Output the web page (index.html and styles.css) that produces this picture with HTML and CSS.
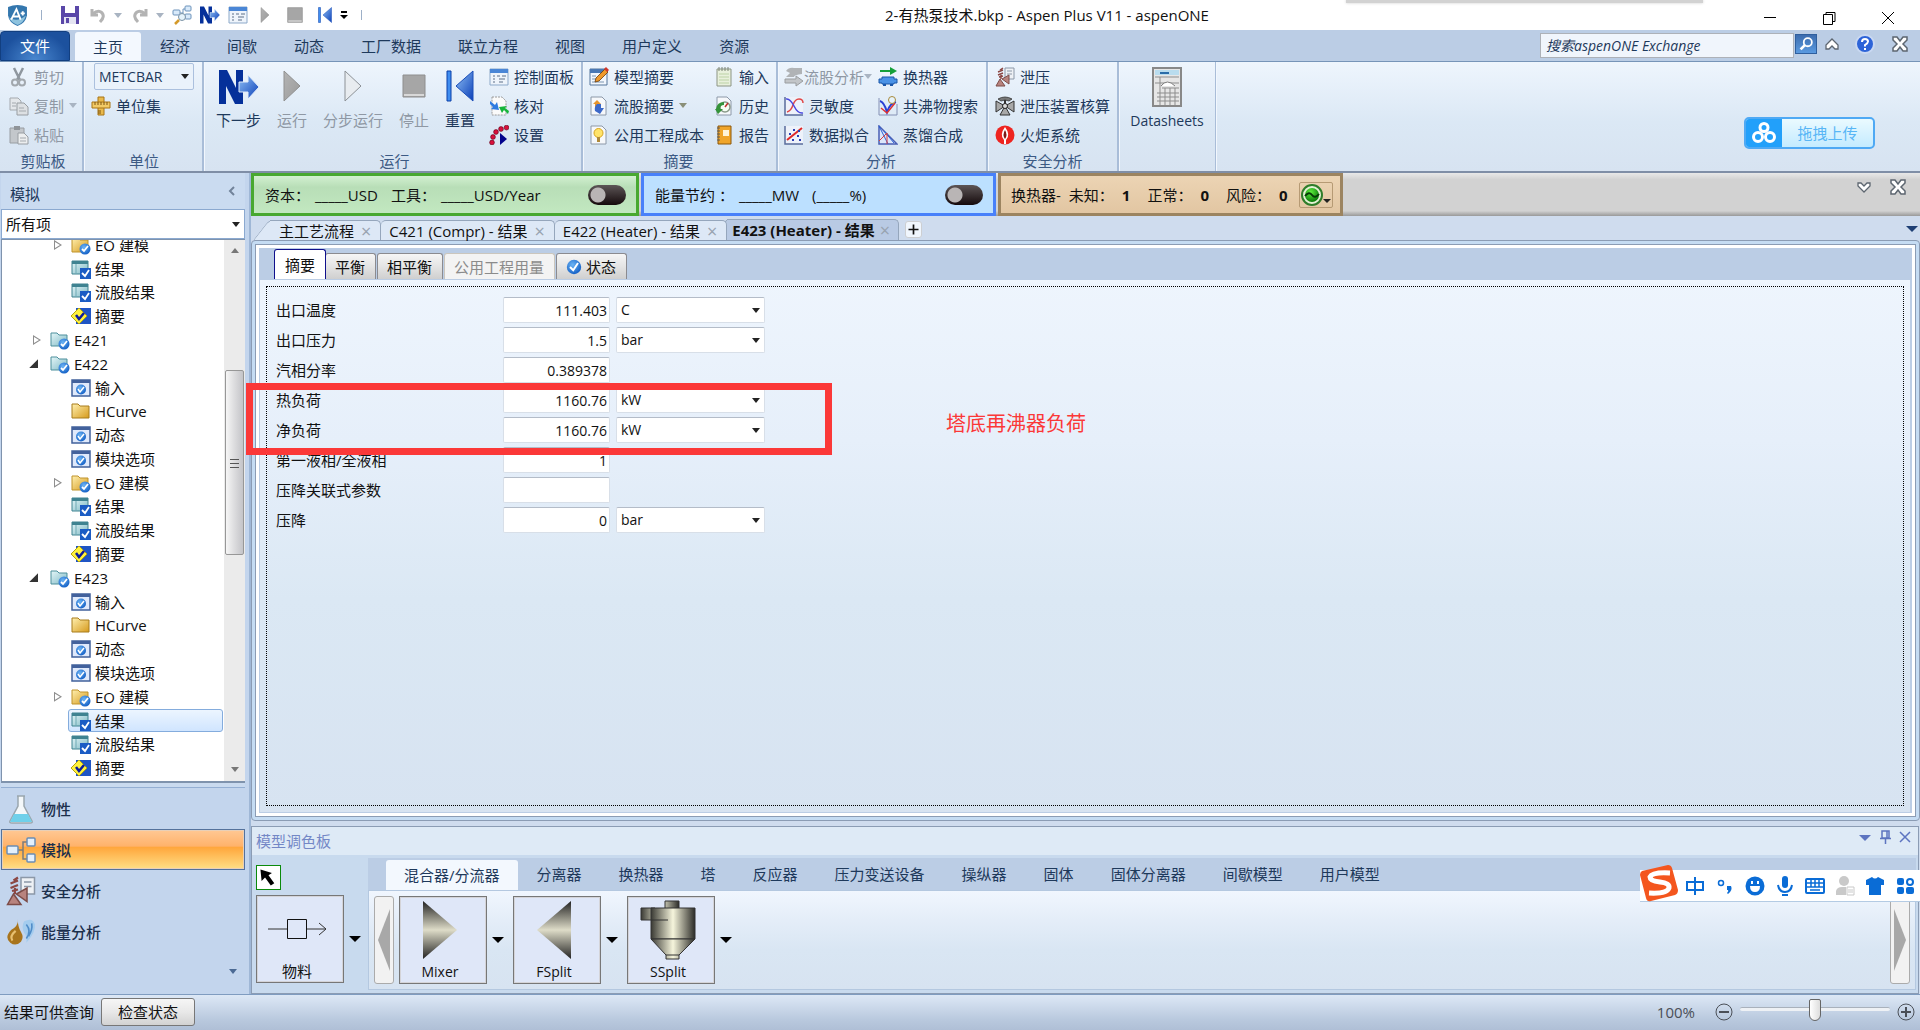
FILE: index.html
```html
<!DOCTYPE html>
<html lang="zh-CN">
<head>
  <meta charset="UTF-8">
  <meta name="viewport" content="width=device-width, initial-scale=1.0">
  <title>2-有热泵技术.bkp - Aspen Plus V11 - aspenONE</title>
  <link rel="stylesheet" href="styles.css">
</head>
<body>
  <!-- Icon sprite -->
  <svg class="sprite" width="0" height="0" aria-hidden="true">
    <defs>
      <linearGradient id="g-blue" x1="0" y1="0" x2="1" y2="1"><stop offset="0" stop-color="#8fc0f5"/><stop offset="1" stop-color="#0b3fb8"/></linearGradient>
      <linearGradient id="g-grey" x1="0" y1="0" x2="1" y2="1"><stop offset="0" stop-color="#b4b4b4"/><stop offset="1" stop-color="#9a9a9a"/></linearGradient>
      <linearGradient id="g-gold" x1="0" y1="0" x2="1" y2="1"><stop offset="0" stop-color="#fff0b0"/><stop offset="1" stop-color="#d69a1c"/></linearGradient>
      <linearGradient id="g-teal" x1="0" y1="0" x2="1" y2="1"><stop offset="0" stop-color="#e4f6f8"/><stop offset="1" stop-color="#7fb9c4"/></linearGradient>
      <linearGradient id="g-coneY" x1="0" y1="0" x2="0" y2="1"><stop offset="0" stop-color="#222"/><stop offset=".5" stop-color="#dedcc8"/><stop offset="1" stop-color="#222"/></linearGradient>
      <linearGradient id="g-coneX" x1="0" y1="0" x2="1" y2="0"><stop offset="0" stop-color="#3a3a34"/><stop offset=".5" stop-color="#f6f5dc"/><stop offset="1" stop-color="#2c2c28"/></linearGradient>
      <radialGradient id="g-ball" cx=".4" cy=".35" r=".7"><stop offset="0" stop-color="#6cb4f4"/><stop offset="1" stop-color="#0f5cc4"/></radialGradient>
      <radialGradient id="g-green" cx=".4" cy=".3" r=".7"><stop offset="0" stop-color="#5fef3e"/><stop offset="1" stop-color="#087a08"/></radialGradient>
    </defs>
    <symbol id="i-logo" viewBox="0 0 20 20"><path d="M1 2q9-4 18 0v8q-1 7-9 10Q2 17 1 10z" fill="#3477ae"/><path d="M2 12q8 5 16-2-2 7-8 9-6-2-8-7z" fill="#8fc3de"/><path d="M4 14 9 4l4 10M6 11h5M13 8h4M15 6v4" fill="none" stroke="#fff" stroke-width="1.800"/></symbol>
    <symbol id="i-save" viewBox="0 0 20 20"><path d="M1 1h18v18H1z" fill="#5a47a8"/><path d="M5 1h10v7H5z" fill="#fff"/><path d="M4 12h12v7H4z" fill="#e4e4f2"/><path d="M6 13h3v5H6z" fill="#5a47a8"/></symbol>
    <symbol id="i-undo" viewBox="0 0 20 20"><path d="M4 4v6h6M5 9q4-4 8-2 5 4-1 10" fill="none" stroke="#b3b3b3" stroke-width="3"/></symbol>
    <symbol id="i-redo" viewBox="0 0 20 20"><path d="M16 4v6h-6M15 9q-4-4-8-2-5 4 1 10" fill="none" stroke="#b3b3b3" stroke-width="3"/></symbol>
    <symbol id="i-flow" viewBox="0 0 20 20"><path d="M6 8h5M11 4v8M11 4h3M11 12h3" stroke="#6d93bb" fill="none"/><rect x="1" y="5" width="7" height="5" rx="1" fill="#d9eafa" stroke="#6d93bb"/><rect x="13" y="1" width="6" height="5" rx="1" fill="#d9eafa" stroke="#6d93bb"/><rect x="13" y="9" width="6" height="5" rx="1" fill="#d9eafa" stroke="#6d93bb"/><circle cx="10" cy="12" r="3.500" fill="#e6f3fb" stroke="#7c93a5"/><path d="m7 15-4 4" stroke="#d49a2a" stroke-width="2.500"/></symbol>
    <symbol id="i-next" viewBox="0 0 40 34"><path d="M0 0h8l9 18V0h7v34h-8L7 16v18H0z" fill="#05309a"/><path d="M20 12h9V5l11 12-11 12v-7h-9z" fill="url(#g-blue)" stroke="#dfeafa"/></symbol>
    <symbol id="i-panel" viewBox="0 0 20 20"><path d="M1 2h18v16H1z" fill="#eef4fb" stroke="#8da9c9"/><path d="M1 2h18v4H1z" fill="#4a86d6"/><path d="M4 9h2M4 12h2M4 15h2M8 9h3M13 9h4M10 12h6M10 15h4" stroke="#5c6f87" fill="none"/></symbol>
    <symbol id="i-run" viewBox="0 0 18 32"><path d="M1 1v30l16-15z" fill="url(#g-grey)" stroke="#909090"/></symbol>
    <symbol id="i-step" viewBox="0 0 18 32"><path d="M1 1v30l16-15z" fill="#e8ecf0" stroke="#8c9196"/></symbol>
    <symbol id="i-stop" viewBox="0 0 24 24"><path d="M1 1h22v22H1z" fill="#a6a6a6" stroke="#8e8e8e"/><path d="M2 21h20" stroke="#d8d8d8" stroke-width="2"/></symbol>
    <symbol id="i-reset" viewBox="0 0 28 32"><path d="M1 1h4v30H1z" fill="#3f8df0" stroke="#0b3fa8"/><path d="M27 1v30L10 16z" fill="url(#g-blue)" stroke="#1b4eb8"/></symbol>
    <symbol id="i-cut" viewBox="0 0 20 20"><path d="m5 1 6 12M14 1 8 13" stroke="#8f979f" stroke-width="2.500"/><circle cx="6" cy="15.500" r="3" fill="none" stroke="#a2a8ae" stroke-width="2"/><circle cx="13" cy="15.500" r="3" fill="none" stroke="#a2a8ae" stroke-width="2"/></symbol>
    <symbol id="i-copy" viewBox="0 0 20 20"><path d="M1 2h8l3 3v9H1z" fill="#e4e7ea" stroke="#a4a9ae"/><path d="M8 7h7l4 4v8H8z" fill="#dde0e3" stroke="#989da2"/><path d="M3 7h4M3 10h4M10 12h5M10 15h7" stroke="#a4a9ae"/></symbol>
    <symbol id="i-paste" viewBox="0 0 20 20"><path d="M1 3h14v15H1z" fill="#c3c7cb" stroke="#989da2"/><path d="M5 1h6v4H5z" fill="#8f9499"/><path d="M9 8h6l4 4v7H9z" fill="#eceeef" stroke="#989da2"/><path d="M11 13h6M11 16h6" stroke="#a4a9ae"/></symbol>
    <symbol id="i-ruler" viewBox="0 0 20 20"><path d="M7 1h6v18H7z" fill="#e9b94c" stroke="#a87514"/><path d="M1 6h18v6H1z" fill="#f2ca66" stroke="#a87514"/><path d="M4 6v3M7 6v3M10 6v3M13 6v3M16 6v3M7 15h3M7 17h3" stroke="#7c5510"/></symbol>
    <symbol id="i-check" viewBox="0 0 20 20"><path d="M3 1h10l4 4v14H3z" fill="#fafafa" stroke="#9a9a9a" stroke-dasharray="2 1"/><path d="m1 5 5 4 2-3 2 8-8-1 2-2-3-3z" fill="#2f7be0"/><path d="m19 18-4-4-2 3-3-6 8-1-2 2 4 3z" fill="#17b53a"/></symbol>
    <symbol id="i-settings" viewBox="0 0 20 20"><g fill="#d8103c" stroke="#5c0018" stroke-width=".6"><circle cx="3" cy="17.500" r="2.400"/><circle cx="4" cy="12" r="2.400"/><circle cx="7" cy="7" r="2.400"/><circle cx="12" cy="4" r="2.400"/><circle cx="17.500" cy="2.600" r="2.400"/></g><path d="m11 8 7 6-7 6z" fill="#02028c"/></symbol>
    <symbol id="i-model" viewBox="0 0 20 20"><path d="M1 2h17v16H1z" fill="#f2f7fd" stroke="#54749a"/><path d="M1 2h17v4H1z" fill="#4a78b4"/><path d="M3 9h4M3 12h4M3 15h12" stroke="#7d95b0"/><path d="m6 15 1-4 9-9 3 3-9 9z" fill="#f09a2c" stroke="#6b3c0a" stroke-width=".8"/><path d="m15 2 2-2 3 3-2 2z" fill="#d0382c"/></symbol>
    <symbol id="i-stream" viewBox="0 0 20 20"><path d="M2 1h11l4 4v14H2z" fill="#f6f8fb" stroke="#8c98a8"/><path d="M4 8l4-4 4 4h-2v4H6V8z" fill="#e8942a"/><path d="M8 8h4v4h3l-4 6-5-3q-1-4 2-7z" fill="#3c68c8"/></symbol>
    <symbol id="i-cost" viewBox="0 0 20 20"><path d="M2 1h11l4 4v14H2z" fill="#f6f8fb" stroke="#8c98a8"/><circle cx="9.500" cy="8" r="4.500" fill="#ffe36a" stroke="#d8a51c"/><path d="M8 12h3v5H8z" fill="#b08a3a"/></symbol>
    <symbol id="i-input" viewBox="0 0 20 20"><path d="M3 2h14v17H3z" fill="#e8f0dc" stroke="#8c9584"/><path d="M5 0v4M8 0v4M11 0v4M14 0v4" stroke="#7c8476"/><path d="M5 7h10M5 10h10M5 13h10M5 16h10" stroke="#bcd2a6"/></symbol>
    <symbol id="i-history" viewBox="0 0 20 20"><path d="M3 1h10l4 4v14H3z" fill="#f6f8fb" stroke="#8c98a8"/><circle cx="11" cy="11" r="5" fill="#f6fff4" stroke="#8a9a8a" stroke-width="1.500"/><path d="M2 13q1-7 8-7v3q-4 0-4 4h3l-5 5-3-5z" fill="#35933a"/><path d="m11 11 3-4" stroke="#c03030" stroke-width="1.500"/></symbol>
    <symbol id="i-report" viewBox="0 0 20 20"><path d="M4 1h13v18H4z" fill="#f0a52a" stroke="#8a570a"/><path d="M9 5h6v6H9z" fill="#fff4d8"/><path d="M3 3h3M3 6h3M3 9h3M3 12h3M3 15h3" stroke="#5b5b5b"/></symbol>
    <symbol id="i-sflow" viewBox="0 0 20 20"><path d="M2 4q3-4 8-3h8v6q-8 1-8 3H2l4-4z" fill="#b0b3b6"/><path d="M1 12h11V9l7 5-7 5v-3H1z" fill="#c2c5c8" stroke="#9a9da0"/></symbol>
    <symbol id="i-sens" viewBox="0 0 20 20"><path d="M1 1h18v18H1z" fill="#eef2fa"/><path d="M1 1v18h18" fill="none" stroke="#5a6c9c" stroke-width="1.500"/><path d="M3 16q4-1 6-7t6-6 4 4" fill="none" stroke="#e04848" stroke-width="1.500"/><path d="M2 3q4-1 8 7t9 7" fill="none" stroke="#4848e0" stroke-width="1.500"/></symbol>
    <symbol id="i-fit" viewBox="0 0 20 20"><path d="M1 1h18v18H1z" fill="#eef2fa"/><path d="M1 1v18h18" fill="none" stroke="#5a6c9c" stroke-width="1.500"/><path d="M3 15 18 3" stroke="#e02828" stroke-width="2"/><path d="M5 8h2v2H5zM9 4h2v2H9zM8 14h2v2H8zM13 10h2v2h-2zM15 14h2v2h-2zM14 5h2v2h-2z" fill="#2a3fb4"/></symbol>
    <symbol id="i-heatx" viewBox="0 0 20 20"><path d="M2 3h10V0l7 4-7 4V5H2z" fill="#15a03a"/><path d="M1 12h3v-2h12v2h3v4h-3v1H4v-1H1z" fill="#4a92e6" stroke="#1b56a8"/><path d="M5 17h3v2H5zM12 17h3v2h-3z" fill="#1b56a8"/></symbol>
    <symbol id="i-azeo" viewBox="0 0 20 20"><path d="M1 2v17h18V8" fill="none" stroke="#8490b4"/><path d="M2 5q4 1 7 11 3-9 9-10" fill="none" stroke="#2a3fd4" stroke-width="2"/><path d="m3 12 6 5 8-10" fill="none" stroke="#e03030" stroke-width="1.500"/><circle cx="14" cy="4" r="3.500" fill="#e6f3fb" stroke="#a8893a"/></symbol>
    <symbol id="i-dist" viewBox="0 0 20 20"><path d="M1 1v18h18z" fill="#dbe6fa" stroke="#4a5fb4" stroke-width="1.500"/><path d="M1 1 10 19M6 6l10 12" fill="none" stroke="#2a5fd4"/><path d="m1 16 8-8v11" fill="none" stroke="#d83c3c"/></symbol>
    <symbol id="i-relief" viewBox="0 0 20 20"><path d="M10 1h9v11h-9z" fill="#eef1f5" stroke="#8c98a8"/><path d="M12 4h5M12 7h5" stroke="#8c98a8"/><path d="m1 19 4-7 5 7zM7 12l7-4v9z" fill="#b8837e" stroke="#7c4c48"/><path d="M6 12V8M3 8l5-2M3 5l5-2M4 10l4-1M5 3l3-2" stroke="#8c4844" stroke-width="1.500"/></symbol>
    <symbol id="i-valve" viewBox="0 0 20 20"><path d="M3 3q7-4 14 0l-3 2q-4-2-8 0z" fill="#777" stroke="#333" stroke-width=".8"/><path d="M10 10 1 5v11zM10 10l9-5v11zM10 10l-5 9h10z" fill="#a8a8a8" stroke="#333"/><path d="M10 4v6" stroke="#333" stroke-width="2"/><circle cx="10" cy="10" r="2.500" fill="#ddd" stroke="#222"/></symbol>
    <symbol id="i-flare" viewBox="0 0 20 20"><circle cx="10" cy="10" r="9.500" fill="#ee2420"/><path d="M9 19h2v-4q5-5-1-13-6 8-1 13z" fill="#fff"/><path d="M10 5q-3 5 0 9 3-4 0-9z" fill="#801818"/></symbol>
    <symbol id="i-sheet" viewBox="0 0 30 40"><path d="M1 1h28v38H1z" fill="#e6e6e6" stroke="#888" stroke-width="2"/><path d="M3 3h24v5H3z" fill="#b9dcee"/><path d="M8 6h9" stroke="#2a6ca8" stroke-width="2"/><path d="M3 10h24M3 16h24M10 21h17M5 26h22M5 30h22M5 34h22M8 10v28M13 21v17M18 21v17M23 21v17" stroke="#8d8d8d"/><path d="M9 19q6-8 14 0" fill="#fff" stroke="#7d7d7d"/></symbol>
    <symbol id="i-x" viewBox="0 0 18 16"><path d="M2 1h4l3 4 3-4h4v3l-4 4 4 4v3h-4l-3-4-3 4H2v-3l4-4-4-4z" fill="#fff" stroke="#5d6670" stroke-width="1.500"/></symbol>
    <symbol id="i-up" viewBox="0 0 14 12"><path d="m7 1 6 6v4h-3L7 8l-3 3H1V7z" fill="#fff" stroke="#5d6670" stroke-width="1.300"/></symbol>
    <symbol id="i-heart" viewBox="0 0 14 12"><path d="M7 11 1 5V2h3l3 3 3-3h3v3z" fill="#fff" stroke="#5d6670" stroke-width="1.300"/></symbol>
    <symbol id="i-help" viewBox="0 0 20 20"><circle cx="10" cy="10" r="9" fill="#2c63d8" stroke="#c9d8f2" stroke-width="2"/><path d="M7 8q0-3 3-3t3 2.500q0 1.500-3 3.500v1.500M10 14v2" fill="none" stroke="#fff" stroke-width="2"/></symbol>
    <symbol id="i-lens" viewBox="0 0 22 20"><circle cx="13" cy="8" r="4.500" fill="none" stroke="#fff" stroke-width="2"/><path d="m10 11-5 5" stroke="#fff" stroke-width="3"/></symbol>
    <symbol id="i-ball" viewBox="0 0 20 20"><circle cx="10" cy="10" r="9" fill="url(#g-ball)"/><path d="m5 10 4 4 6-9" fill="none" stroke="#fff" stroke-width="2.500"/></symbol>
    <symbol id="i-eo" viewBox="0 0 20 20"><path d="M1 3h6l2 2h8v12H1z" fill="url(#g-gold)" stroke="#c0932a"/><circle cx="14" cy="14" r="5.500" fill="url(#g-ball)"/><path d="m11 14 2 2 4-5" fill="none" stroke="#fff" stroke-width="1.800"/></symbol>
    <symbol id="i-folder" viewBox="0 0 20 20"><path d="M1 3h6l2 2h9v12H1z" fill="url(#g-gold)" stroke="#a87c1c"/></symbol>
    <symbol id="i-block" viewBox="0 0 20 20"><path d="M1 3h6l2 2h8v11H1z" fill="url(#g-teal)" stroke="#4d8f9c"/><circle cx="14" cy="14" r="5.500" fill="url(#g-ball)"/><path d="m11 14 2 2 4-5" fill="none" stroke="#fff" stroke-width="1.800"/></symbol>
    <symbol id="i-result" viewBox="0 0 20 20"><path d="M1 2h16v13H1z" fill="url(#g-teal)" stroke="#3f8391"/><path d="M1 2h16v3H1z" fill="#3f8391"/><path d="M5 5v10" stroke="#6fa9b4"/><path d="M9 9h11v11H9z" fill="#1b5cc4"/><path d="m11 14 3 3 4-6" fill="none" stroke="#fff" stroke-width="1.800"/></symbol>
    <symbol id="i-summary" viewBox="0 0 20 20"><path d="M5 2h15v16H5z" fill="#1f55c4"/><path d="m8 2 8 8-8 8-8-8z" fill="#fff23c" stroke="#b4a410"/><path d="m5 9 3 4 5-6" fill="none" stroke="#0b1b9c" stroke-width="2.500"/></symbol>
    <symbol id="i-form" viewBox="0 0 20 20"><path d="M1 2h18v16H1z" fill="#dfe9fb" stroke="#42619c" stroke-width="1.500"/><path d="M1 2h18v3H1z" fill="#42619c"/><circle cx="10" cy="11.500" r="5" fill="url(#g-ball)"/><path d="m7 11 2 3 4-5" fill="none" stroke="#fff" stroke-width="1.500"/></symbol>
    <symbol id="i-flask" viewBox="0 0 30 30"><path d="M11 2h8M12 2v10L4 27q-1 2 2 2h18q3 0 2-2l-8-15V2" fill="#f4f8fa" stroke="#9aa6ae" stroke-width="1.500"/><path d="M8 20h14l4 8H4z" fill="#6fd0ea"/></symbol>
    <symbol id="i-sim" viewBox="0 0 30 26"><path d="M12 13h5M22 5h-5v17h5" fill="none" stroke="#7c7c7c" stroke-width="1.500"/><g fill="#e4f0fc" stroke="#6b8db4" stroke-width="1.500"><rect x="1" y="9" width="11" height="8" rx="1"/><rect x="21" y="1" width="8" height="8" rx="1"/><rect x="21" y="17" width="8" height="8" rx="1"/></g></symbol>
    <symbol id="i-energy" viewBox="0 0 28 26"><path d="M11 1q1 6-6 10-7 7-1 12 5 4 10-1 3-4 0-9-3-5-3-12z" fill="#a8741c"/><path d="M9 12q-6 5-3 9" fill="none" stroke="#e8c070" stroke-width="2"/><path d="M17 3q8-4 10 3 1 7-8 17 1-6-2-9-3-6 0-11z" fill="#a4ccee"/><path d="M19 6q5 6 0 13M24 5q1 6-3 12" fill="none" stroke="#4f8cc8" stroke-width="1.500"/></symbol>
    <symbol id="i-cloud" viewBox="0 0 24 24"><g fill="none" stroke="#fff" stroke-width="3"><circle cx="12" cy="6.500" r="4"/><circle cx="6" cy="16" r="4.500"/><circle cx="18" cy="16" r="4.500"/></g></symbol>
  </svg>

  <header class="titlebar">
    <div class="quick">
      <svg class="logo"><use href="#i-logo"/></svg>
      <i class="vsep"></i>
      <button aria-label="保存"><svg><use href="#i-save"/></svg></button>
      <button class="split off" aria-label="撤销"><svg><use href="#i-undo"/></svg></button>
      <button class="split off" aria-label="重做"><svg><use href="#i-redo"/></svg></button>
      <button aria-label="流程"><svg><use href="#i-flow"/></svg></button>
      <button aria-label="下一步"><svg><use href="#i-next"/></svg></button>
      <button aria-label="控制面板"><svg><use href="#i-panel"/></svg></button>
      <button class="mini" aria-label="运行"><svg><use href="#i-run"/></svg></button>
      <button class="mini" aria-label="停止"><svg><use href="#i-stop"/></svg></button>
      <button class="mini" aria-label="重置"><svg><use href="#i-reset"/></svg></button>
      <button class="more" aria-label="自定义"><svg viewBox="0 0 8 8"><path d="M1 0h6v2H1zM0 4h8L4 8z"/></svg></button>
      <i class="vsep"></i>
    </div>
    <h1>2-有热泵技术.bkp - Aspen Plus V11 - aspenONE</h1>
    <div class="window-buttons">
      <button aria-label="最小化"><svg viewBox="0 0 14 14"><path d="M1 6.500h12"/></svg></button>
      <button aria-label="还原"><svg viewBox="0 0 14 14"><path d="M1.500 3.500h9v10h-9zM4 3V1.500h9v9h-2"/></svg></button>
      <button aria-label="关闭"><svg viewBox="0 0 14 14"><path d="m1 1 12 12M13 1 1 13"/></svg></button>
    </div>
    <div class="dock-edge"></div>
  </header>

  <nav class="menu">
    <button class="file">文件</button>
    <div class="tabs">
      <button class="tab active">主页</button>
      <button class="tab">经济</button>
      <button class="tab">间歇</button>
      <button class="tab">动态</button>
      <button class="tab">工厂数据</button>
      <button class="tab">联立方程</button>
      <button class="tab">视图</button>
      <button class="tab">用户定义</button>
      <button class="tab">资源</button>
    </div>
    <div class="menu-tools">
      <input class="search" type="text" aria-label="搜索" value="搜索aspenONE Exchange">
      <button class="search-go" aria-label="搜索"><svg><use href="#i-lens"/></svg></button>
      <button class="w14" aria-label="折叠功能区"><svg><use href="#i-up"/></svg></button>
      <button class="w20" aria-label="帮助"><svg><use href="#i-help"/></svg></button>
      <button class="w16" aria-label="关闭"><svg><use href="#i-x"/></svg></button>
    </div>
  </nav>

  <section class="ribbon">
    <div class="group clipboard">
      <div class="group-body">
        <div class="col">
          <button class="cmd off"><svg><use href="#i-cut"/></svg>剪切</button>
          <button class="cmd off drop"><svg><use href="#i-copy"/></svg>复制</button>
          <button class="cmd off"><svg><use href="#i-paste"/></svg>粘贴</button>
        </div>
      </div>
      <h2>剪贴板</h2>
    </div>
    <div class="group units">
      <div class="group-body">
        <div class="col">
          <select class="unit-set" aria-label="单位集"><option>METCBAR</option></select>
          <button class="cmd"><svg><use href="#i-ruler"/></svg>单位集</button>
        </div>
      </div>
      <h2>单位</h2>
    </div>
    <div class="group run">
      <div class="group-body">
        <button class="big"><svg class="w40"><use href="#i-next"/></svg>下一步</button>
        <button class="big off"><svg><use href="#i-run"/></svg>运行</button>
        <button class="big off"><svg><use href="#i-step"/></svg>分步运行</button>
        <button class="big off"><svg class="w24"><use href="#i-stop"/></svg>停止</button>
        <button class="big"><svg><use href="#i-reset"/></svg>重置</button>
        <div class="col">
          <button class="cmd"><svg><use href="#i-panel"/></svg>控制面板</button>
          <button class="cmd"><svg><use href="#i-check"/></svg>核对</button>
          <button class="cmd"><svg><use href="#i-settings"/></svg>设置</button>
        </div>
      </div>
      <h2>运行</h2>
    </div>
    <div class="group summary">
      <div class="group-body">
        <div class="col">
          <button class="cmd"><svg><use href="#i-model"/></svg>模型摘要</button>
          <button class="cmd drop"><svg><use href="#i-stream"/></svg>流股摘要</button>
          <button class="cmd"><svg><use href="#i-cost"/></svg>公用工程成本</button>
        </div>
        <div class="col">
          <button class="cmd"><svg><use href="#i-input"/></svg>输入</button>
          <button class="cmd"><svg><use href="#i-history"/></svg>历史</button>
          <button class="cmd"><svg><use href="#i-report"/></svg>报告</button>
        </div>
      </div>
      <h2>摘要</h2>
    </div>
    <div class="group analysis">
      <div class="group-body">
        <div class="col">
          <button class="cmd off drop tight"><svg><use href="#i-sflow"/></svg>流股分析</button>
          <button class="cmd"><svg><use href="#i-sens"/></svg>灵敏度</button>
          <button class="cmd"><svg><use href="#i-fit"/></svg>数据拟合</button>
        </div>
        <div class="col">
          <button class="cmd"><svg><use href="#i-heatx"/></svg>换热器</button>
          <button class="cmd"><svg><use href="#i-azeo"/></svg>共沸物搜索</button>
          <button class="cmd"><svg><use href="#i-dist"/></svg>蒸馏合成</button>
        </div>
      </div>
      <h2>分析</h2>
    </div>
    <div class="group safety">
      <div class="group-body">
        <div class="col">
          <button class="cmd"><svg><use href="#i-relief"/></svg>泄压</button>
          <button class="cmd"><svg><use href="#i-valve"/></svg>泄压装置核算</button>
          <button class="cmd"><svg><use href="#i-flare"/></svg>火炬系统</button>
        </div>
      </div>
      <h2>安全分析</h2>
    </div>
    <div class="group sheets">
      <div class="group-body">
        <button class="big latin"><svg><use href="#i-sheet"/></svg>Datasheets</button>
      </div>
    </div>
    <button class="upload"><span class="upload-icon"><svg><use href="#i-cloud"/></svg></span><span class="upload-text">拖拽上传</span></button>
  </section>

  <div class="workspace">
    <aside class="sidebar">
      <div class="side-head"><h2>模拟</h2><button aria-label="收起"><svg viewBox="0 0 8 10"><path d="M6 1 2 5l4 4"/></svg></button></div>
      <select class="filter" aria-label="筛选"><option>所有项</option></select>
      <div class="tree">
        <ul>
          <li class="sub closed"><a href="#"><svg><use href="#i-eo"/></svg>EO 建模</a></li>
          <li class="sub"><a href="#"><svg><use href="#i-result"/></svg>结果</a></li>
          <li class="sub"><a href="#"><svg><use href="#i-result"/></svg>流股结果</a></li>
          <li class="sub"><a href="#"><svg><use href="#i-summary"/></svg>摘要</a></li>
          <li class="closed"><a href="#"><svg><use href="#i-block"/></svg>E421</a></li>
          <li class="open"><a href="#"><svg><use href="#i-block"/></svg>E422</a></li>
          <li class="sub"><a href="#"><svg><use href="#i-form"/></svg>输入</a></li>
          <li class="sub"><a href="#"><svg><use href="#i-folder"/></svg>HCurve</a></li>
          <li class="sub"><a href="#"><svg><use href="#i-form"/></svg>动态</a></li>
          <li class="sub"><a href="#"><svg><use href="#i-form"/></svg>模块选项</a></li>
          <li class="sub closed"><a href="#"><svg><use href="#i-eo"/></svg>EO 建模</a></li>
          <li class="sub"><a href="#"><svg><use href="#i-result"/></svg>结果</a></li>
          <li class="sub"><a href="#"><svg><use href="#i-result"/></svg>流股结果</a></li>
          <li class="sub"><a href="#"><svg><use href="#i-summary"/></svg>摘要</a></li>
          <li class="open"><a href="#"><svg><use href="#i-block"/></svg>E423</a></li>
          <li class="sub"><a href="#"><svg><use href="#i-form"/></svg>输入</a></li>
          <li class="sub"><a href="#"><svg><use href="#i-folder"/></svg>HCurve</a></li>
          <li class="sub"><a href="#"><svg><use href="#i-form"/></svg>动态</a></li>
          <li class="sub"><a href="#"><svg><use href="#i-form"/></svg>模块选项</a></li>
          <li class="sub closed"><a href="#"><svg><use href="#i-eo"/></svg>EO 建模</a></li>
          <li class="sub"><a href="#" class="selected"><svg><use href="#i-result"/></svg>结果</a></li>
          <li class="sub"><a href="#"><svg><use href="#i-result"/></svg>流股结果</a></li>
          <li class="sub"><a href="#"><svg><use href="#i-summary"/></svg>摘要</a></li>
        </ul>
        <div class="scrollbar">
          <i class="arrow up"></i>
          <div class="track"><div class="thumb"></div></div>
          <i class="arrow down"></i>
        </div>
      </div>
      <div class="side-split"></div>
      <nav class="modes">
        <button><svg><use href="#i-flask"/></svg>物性</button>
        <button class="current"><svg><use href="#i-sim"/></svg>模拟</button>
        <button><svg><use href="#i-relief"/></svg>安全分析</button>
        <button><svg><use href="#i-energy"/></svg>能量分析</button>
        <div class="modes-foot"><i class="arrow down"></i></div>
      </nav>
    </aside>

    <main class="main">
      <div class="dash">
        <div class="dash-box capital">
          <span>资本：</span><span class="value">_____USD</span><span>工具：</span><span class="value">_____USD/Year</span>
          <input type="checkbox" class="toggle" aria-label="资本">
        </div>
        <div class="dash-box energy">
          <span>能量节约 ：</span><span class="value">_____MW</span><span class="value">(_____%)</span>
          <input type="checkbox" class="toggle" aria-label="能量节约">
        </div>
        <div class="dash-box exchanger">
          <span>换热器-</span><span>未知：</span><b>1</b><span>正常：</span><b>0</b><span>风险：</span><b>0</b>
          <button class="status" aria-label="换热器状态"><svg viewBox="0 0 32 24"><circle cx="12" cy="12" r="10" fill="#e4f2d4" stroke="#2f7d2a" stroke-width="2"/><circle cx="12" cy="12" r="7" fill="url(#g-green)"/><path d="M5 13q4-5 7-1t7-1" fill="none" stroke="#063a06" stroke-width="2"/><path d="M23 16h8l-4 4z" fill="#222"/></svg></button>
        </div>
        <div class="dash-tools">
          <button class="w14" aria-label="展开"><svg><use href="#i-heart"/></svg></button>
          <button class="w16" aria-label="关闭"><svg><use href="#i-x"/></svg></button>
        </div>
      </div>

      <div class="doc-tabs">
        <button class="doc slant">主工艺流程<i>×</i></button>
        <button class="doc">C421 (Compr) - 结果<i>×</i></button>
        <button class="doc">E422 (Heater) - 结果<i>×</i></button>
        <button class="doc slant active">E423 (Heater) - 结果<i>×</i></button>
        <button class="plus" aria-label="新建"><svg viewBox="0 0 16 18"><path d="M2 9h12M8 3v12" stroke="#111" stroke-width="2"/></svg></button>
        <i class="arrow down wide"></i>
      </div>

      <section class="sheet">
        <div class="sheet-inner">
          <div class="page-tabs">
            <button class="page active">摘要</button>
            <button class="page">平衡</button>
            <button class="page">相平衡</button>
            <button class="page" disabled>公用工程用量</button>
            <button class="page"><svg><use href="#i-ball"/></svg>状态</button>
          </div>
          <div class="panel">
            <form class="form">
              <label for="f1">出口温度</label><input id="f1" type="text" value="111.403"><select aria-label="出口温度单位"><option>C</option></select>
              <label for="f2">出口压力</label><input id="f2" type="text" value="1.5"><select aria-label="出口压力单位"><option>bar</option></select>
              <label for="f3">汽相分率</label><input id="f3" type="text" value="0.389378">
              <label for="f4">热负荷</label><input id="f4" type="text" value="1160.76"><select aria-label="热负荷单位"><option>kW</option></select>
              <label for="f5">净负荷</label><input id="f5" type="text" value="1160.76"><select aria-label="净负荷单位"><option>kW</option></select>
              <label for="f6">第一液相/全液相</label><input id="f6" type="text" value="1">
              <label for="f7">压降关联式参数</label><input id="f7" type="text" value="">
              <label for="f8">压降</label><input id="f8" type="text" value="0"><select aria-label="压降单位"><option>bar</option></select>
            </form>
            <div class="highlight"></div>
            <p class="note">塔底再沸器负荷</p>
          </div>
        </div>
      </section>

      <section class="palette">
        <div class="palette-head">
          <h2>模型调色板</h2>
          <svg viewBox="0 0 52 14"><path d="M0 5h12L6 11z" fill="#5d74c0"/><path d="M23 1h7v7h-7zM28 1v7M21 8.500h11M26.500 9v5M41 2l10 10M51 2 41 12" fill="none" stroke="#5d74c0" stroke-width="1.500"/></svg>
        </div>
        <div class="palette-body">
          <div class="palette-left">
            <button class="pointer" aria-label="选择"><svg viewBox="0 0 20 20"><path d="M3 3l10 3-3 2 5 7-3 2-5-7-3 3z"/></svg></button>
            <div class="item">
              <button class="model"><svg viewBox="0 0 60 60"><path d="M1 30h19M40 30h19M52 24l7 6-7 6" fill="none" stroke="#333"/><path d="M20.500 20.500h19v19h-19z" fill="none" stroke="#111"/></svg>物料</button>
              <i class="arrow down wide"></i>
            </div>
          </div>
          <div class="palette-right">
            <div class="tabs">
              <button class="tab active">混合器/分流器</button>
              <button class="tab">分离器</button>
              <button class="tab">换热器</button>
              <button class="tab">塔</button>
              <button class="tab">反应器</button>
              <button class="tab">压力变送设备</button>
              <button class="tab">操纵器</button>
              <button class="tab">固体</button>
              <button class="tab">固体分离器</button>
              <button class="tab">间歇模型</button>
              <button class="tab">用户模型</button>
            </div>
            <div class="models">
              <button class="pager" aria-label="上一页"><svg viewBox="0 0 12 62"><path d="M12 0v62L0 31z"/></svg></button>
              <div class="item">
                <button class="model latin"><svg viewBox="0 0 60 60"><path d="M13 1v58l34-29z" fill="url(#g-coneY)"/></svg>Mixer</button>
                <i class="arrow down wide"></i>
              </div>
              <div class="item">
                <button class="model latin"><svg viewBox="0 0 60 60"><path d="M47 1v58L13 30z" fill="url(#g-coneY)"/></svg>FSplit</button>
                <i class="arrow down wide"></i>
              </div>
              <div class="item">
                <button class="model latin"><svg viewBox="0 0 60 60"><g fill="url(#g-coneX)" stroke="#333"><path d="M27 1h14v8H27zM3 8h14v12H3z"/><path d="M13 8h44v31H13zM28 54h13v5H28z"/><path d="M13 39h44L41 55H28z"/></g><path d="M13 20h17" stroke="#333"/></svg>SSplit</button>
                <i class="arrow down wide"></i>
              </div>
              <button class="pager last" aria-label="下一页"><svg viewBox="0 0 12 62"><path d="M0 0v62l12-31z"/></svg></button>
            </div>
          </div>
        </div>
      </section>
    </main>
  </div>

  <footer class="statusbar">
    <span>结果可供查询</span>
    <button class="check">检查状态</button>
    <div class="zoom">
      <span>100%</span>
      <button aria-label="缩小"><svg viewBox="0 0 18 18"><circle cx="9" cy="9" r="8"/><path d="M4 9h10"/></svg></button>
      <input type="range" min="0" max="200" value="100" aria-label="缩放">
      <button aria-label="放大"><svg viewBox="0 0 18 18"><circle cx="9" cy="9" r="8"/><path d="M4 9h10M9 4v10"/></svg></button>
    </div>
  </footer>

  <!-- Input method bar, floats over everything -->
  <div class="ime">
    <svg class="ime-logo" viewBox="0 0 40 38"><path d="M3 7 29 1q3 0 4 3l6 22q0 4-3 5L12 37q-4 1-5-3L1 11q0-3 2-4z" fill="#f4561e"/><path d="M31 9Q13 8 11 13q0 4 10 5 10 1 9 6-2 6-20 5" fill="none" stroke="#fff" stroke-width="5"/></svg>
    <svg viewBox="0 0 20 20"><path d="M2 6h16v8H2zM10 1v18" fill="none" stroke="#0a6cd6" stroke-width="2"/></svg>
    <svg viewBox="0 0 20 20"><circle cx="6" cy="7" r="2.500" fill="none" stroke="#0a6cd6" stroke-width="1.500"/><path d="M12 10h4q2 4-3 8l-1-1q2-2 1-3h-1z" fill="#0a6cd6"/></svg>
    <svg viewBox="0 0 20 20"><circle cx="10" cy="10" r="9.500" fill="#0a6cd6"/><path d="M5 10h10q0 6-5 6t-5-6zM6 5h2v3H6zM12 5h2v3h-2z" fill="#fff"/></svg>
    <svg viewBox="0 0 20 20"><rect x="7" y="0" width="6" height="12" rx="3" fill="#0a6cd6"/><path d="M3 9q1 7 7 7t7-7M7 19h6" fill="none" stroke="#0a6cd6" stroke-width="2"/></svg>
    <svg viewBox="0 0 20 20"><rect x="1" y="3" width="18" height="14" rx="1" fill="none" stroke="#0a6cd6" stroke-width="2"/><path d="M2 7h16M2 11h16M5 14h10M6 4v7M10 4v7M14 4v7" stroke="#0a6cd6" stroke-width="1.500"/></svg>
    <svg viewBox="0 0 20 20"><circle cx="9" cy="5" r="5" fill="#c9c9c9"/><path d="M1 19v-4q1-4 6-4h4v8z" fill="#c9c9c9"/><path d="M12 11h7v8h-7zM13 14h5M13 16h5" fill="#fff" stroke="#c9c9c9"/></svg>
    <svg viewBox="0 0 20 20"><path d="M1 4 7 1q3 3 6 0l6 3v5h-3v10H4V9H1z" fill="#0a6cd6"/></svg>
    <svg viewBox="0 0 20 20"><rect x="2" y="2" width="7" height="7" rx="2" fill="#0a6cd6"/><rect x="12" y="3" width="6" height="6" rx="3" fill="none" stroke="#0a6cd6" stroke-width="2"/><rect x="2" y="11" width="7" height="7" rx="2" fill="#0a6cd6"/><rect x="11" y="11" width="8" height="7" rx="2" fill="#0a6cd6"/></svg>
  </div>
</body>
</html>
```
FILE: styles.css
```css
* {
  box-sizing: border-box;
}
body {
  margin: 0;
  height: 100vh;
  display: flex;
  flex-direction: column;
  overflow: hidden;
  font-family: "Open Sans", "Noto Sans CJK SC", sans-serif;
  font-size: 15px;
  line-height: 20px;
  color: #111;
  background: #c3d4eb;
}
h1, h2, p, ul {
  margin: 0;
  padding: 0;
  font-size: 15px;
  font-weight: 400;
}
button, input, select {
  font: inherit;
  color: inherit;
  margin: 0;
  padding: 0;
  border: 0;
  background: none;
  border-radius: 0;
}
button {
  white-space: nowrap;
}
svg {
  display: block;
  flex: none;
}
select {
  appearance: none;
}
.sprite {
  position: absolute;
}
.w14 svg { width: 14px; height: 12px; }
.w16 svg { width: 18px; height: 16px; }
.w20 svg { width: 20px; height: 20px; }

/* small triangles */
.arrow {
  width: 0;
  height: 0;
  flex: none;
  border: 4px solid transparent;
}
.arrow.down {
  border-top: 5px solid #4b6a94;
  border-bottom: 0;
}
.arrow.up {
  border-bottom: 5px solid #777;
  border-top: 0;
}
.arrow.wide {
  border-width: 6px 6px 0;
  border-top-color: #000;
}

/* title bar */
.titlebar {
  height: 30px;
  flex: none;
  display: grid;
  grid-template-columns: auto 1fr auto;
  align-items: center;
  background: #fff;
  position: relative;
}
.titlebar h1 {
  padding-right: 36px;
  text-align: center;
}
.quick {
  display: flex;
  align-items: center;
  padding-left: 7px;
  gap: 8px;
}
.quick svg {
  width: 20px;
  height: 20px;
}
.quick > .vsep:first-of-type {
  margin-right: 10px;
}
.quick .mini {
  margin-right: 4px;
}
.quick .mini svg {
  width: 18px;
  height: 16px;
}
.quick .logo {
  width: 21px;
  height: 21px;
}
.vsep {
  width: 1px;
  height: 10px;
  margin: 0 5px;
  background: #9db0c8;
}
.quick .split {
  display: flex;
  align-items: center;
  gap: 6px;
}
.split::after, .drop::after {
  content: "";
  border: 4px solid transparent;
  border-top: 5px solid #8a8f78;
  border-bottom: 0;
}
.split.off::after, .drop.off::after {
  border-top-color: #a9b4c2;
}
.quick .more {
  margin-left: -6px;
}
.quick .more svg {
  width: 8px;
  height: 8px;
}
.window-buttons {
  display: flex;
  gap: 45px;
  padding: 6px 25px 0 0;
}
.window-buttons svg {
  width: 14px;
  height: 14px;
  fill: none;
  stroke: #000;
}
.dock-edge {
  position: absolute;
  top: 0;
  right: 217px;
  width: 357px;
  height: 3px;
  background: #d2d2d2;
  box-shadow: 0 0 3px #ccc;
}

/* tab strip */
.menu {
  height: 32px;
  flex: none;
  display: flex;
  background: #bbcde5;
  border-bottom: 1px solid #7694b8;
}
.file {
  width: 70px;
  margin: 1px 5px 0 0;
  color: #fff;
  background: radial-gradient(ellipse at bottom, #4a88d0, #1c519e 70%);
  border: 1px solid #123f80;
  border-radius: 4px 4px 0 0;
}
.tabs {
  display: flex;
  gap: 1px;
}
.tab {
  padding: 0 18px;
  color: #1e395b;
}
.tab.active {
  margin-top: 2px;
  background: #f3f8fe;
  border-radius: 3px 3px 0 0;
}
.menu-tools {
  margin-left: auto;
  display: flex;
  align-items: center;
  gap: 16px;
  padding: 0 11px 3px 0;
}
.search {
  width: 254px;
  height: 25px;
  margin: 2px -15px 0 0;
  padding: 0 5px;
  font-size: 14px;
  font-style: italic;
  color: #1e395b;
  background: #f0f5fc;
  border: 1px solid #adb1b8;
}
.search-go {
  margin-right: -8px;
  background: linear-gradient(#3c6cae, #5a9ae0);
  border: 1px solid #2f5f9e;
}
.search-go svg {
  width: 20px;
  height: 18px;
}

/* ribbon */
.ribbon {
  height: 111px;
  flex: none;
  display: flex;
  position: relative;
  background: linear-gradient(#eef5fd, #dbe8f5 55%, #d7e3f1);
  border-bottom: 2px solid #7f8ea6;
}
.group {
  display: flex;
  flex-direction: column;
  justify-content: space-between;
  border-right: 2px solid #a9bdd8;
  box-shadow: 1px 0 #f2f7fd;
}
.group h2 {
  text-align: center;
  color: #3c5a84;
}
.group-body {
  display: flex;
}
.col {
  display: grid;
  grid-auto-rows: 29px;
  align-items: center;
  align-content: start;
  justify-items: start;
}
.cmd {
  display: flex;
  align-items: center;
  gap: 5px;
  color: #1e395b;
}
.cmd svg {
  width: 20px;
  height: 20px;
}
.cmd.tight { gap: 0; }
.cmd.off, .big.off {
  color: #8f98a4;
}
.big {
  display: flex;
  flex-direction: column;
  align-items: center;
  justify-content: space-between;
  height: 68px;
  padding: 8px 8px 0;
  color: #1e395b;
}
.big svg {
  width: 30px;
  height: 32px;
}
.big .w40 { width: 40px; height: 34px; }
.big .w24 { width: 24px; }
.latin { font-size: 14px; }
.clipboard { width: 84px; padding-left: 9px; }
.clipboard h2 { padding-right: 5px; }
.units { width: 120px; padding-left: 7px; }
.units h2 { padding-right: 5px; }
.run { width: 379px; padding-left: 4px; }
.run .col { margin-left: 6px; }
.summary { width: 195px; padding-left: 6px; }
.summary .col + .col { margin-left: 10px; }
.summary h2, .analysis h2 { padding-right: 8px; }
.analysis { width: 210px; padding-left: 6px; }
.analysis .col + .col { margin-left: 6px; }
.safety { width: 131px; padding-left: 7px; }
.safety h2 { padding-right: 7px; }
.sheets { width: 97px; border-right-width: 1px; align-items: center; }
.sheets .big { height: 69px; padding-top: 5px; }
.sheets .big svg { height: 40px; }
.unit-set {
  width: 100px;
  height: 27px;
  margin-left: 3px;
  padding: 0 4px;
  font-size: 14px;
  color: #1e395b;
  background-color: #eaf2fb;
  border: 1px solid #abc0de;
  border-radius: 2px;
}
.unit-set, .filter, .form select {
  background-image: url("data:image/svg+xml,%3Csvg xmlns='http://www.w3.org/2000/svg' viewBox='0 0 10 6'%3E%3Cpath d='M0 0h10L5 6z' fill='%23222'/%3E%3C/svg%3E");
  background-repeat: no-repeat;
  background-size: 8px 5px;
  background-position: right 4px center;
}
.upload {
  position: absolute;
  right: 45px;
  top: 55px;
  height: 32px;
  display: flex;
  padding: 0;
  border: 2px solid #4fa9f4;
  border-radius: 5px;
  background: linear-gradient(#eafaff, #c4ebff);
  overflow: hidden;
}
.upload-icon {
  width: 36px;
  height: 28px;
  display: grid;
  place-items: center;
  background: #22a0fa;
}
.upload-icon svg {
  width: 24px;
  height: 24px;
}
.upload-text {
  width: 91px;
  line-height: 28px;
  color: #58b6f6;
}

/* layout */
.workspace {
  flex: 1;
  min-height: 0;
  display: flex;
}
.sidebar {
  width: 251px;
  flex: none;
  display: flex;
  flex-direction: column;
  padding: 0 4px 0 1px;
  background: #c3d5ed;
  border-right: 2px solid #9fb7d6;
}
.side-head {
  height: 36px;
  display: flex;
  align-items: center;
  justify-content: space-between;
  padding: 5px 9px 0;
  background: #cadbf0;
}
.side-head h2 {
  color: #1e395b;
}
.side-head svg {
  width: 8px;
  height: 10px;
  margin-bottom: 6px;
  fill: none;
  stroke: #71839a;
  stroke-width: 2;
}
.filter {
  height: 30px;
  flex: none;
  padding: 0 4px;
  background-color: #fff;
  border: 1px solid #8ba9d0;
}
.tree {
  flex: 1;
  min-height: 0;
  display: flex;
  overflow: hidden;
  background: #fff;
  border: 1px solid #7f93ad;
  border-width: 1px 0 2px 1px;
}
.tree ul {
  flex: 1;
  display: grid;
  grid-auto-rows: minmax(0, 1fr);
  margin: -7px 1px 1px 0;
  list-style: none;
}
.tree li {
  display: flex;
  align-items: center;
  padding-left: 45px;
}
.tree .sub {
  padding-left: 66px;
}
.tree a {
  flex: 1;
  align-self: stretch;
  display: flex;
  align-items: center;
  gap: 4px;
  padding-left: 2px;
  color: #111;
  text-decoration: none;
  border: 1px solid transparent;
}
.tree a.selected {
  background: linear-gradient(#ecf5ff, #d0e5ff);
  border-color: #84acdd;
  border-radius: 3px;
}
.tree a svg {
  width: 20px;
  height: 20px;
}
.tree .closed::before, .tree .open::before {
  content: "";
  width: 8px;
  height: 10px;
  margin: 0 6px 0 -14px;
  background: #8f8f8f;
  clip-path: polygon(evenodd, 0 0, 100% 50%, 0 100%, 0 0, 1px 2px, 1px 8px, 6px 5px, 1px 2px);
}
.tree .open::before {
  width: 9px;
  height: 9px;
  margin: 0 9px 0 -18px;
  background: #333;
  clip-path: polygon(100% 0, 100% 100%, 0 100%);
}
.scrollbar {
  width: 21px;
  display: flex;
  flex-direction: column;
  align-items: center;
  padding: 8px 0 9px;
  background: #ebebeb;
}
.scrollbar .arrow.down {
  border-top-color: #777;
}
.track {
  flex: 1;
  align-self: stretch;
  padding: 117px 1px 0;
}
.thumb {
  height: 185px;
  background: linear-gradient(#555, #555) center 88px / 9px 1px no-repeat,
    linear-gradient(#555, #555) center 92px / 9px 1px no-repeat,
    linear-gradient(#555, #555) center 96px / 9px 1px no-repeat,
    linear-gradient(90deg, #f6f6f6, #dcdcde 50%, #c4c4c8);
  border: 1px solid #979797;
  border-radius: 2px;
}
.side-split {
  height: 5px;
  background: #c9daef;
  border-bottom: 1px solid #94afd3;
}
.modes {
  height: 206px;
  display: flex;
  flex-direction: column;
}
.modes button {
  height: 41px;
  display: flex;
  align-items: center;
  gap: 5px;
  padding-left: 5px;
  font-weight: 500;
  color: #1b2f4c;
}
.modes svg {
  width: 30px;
  height: 30px;
}
.modes .current {
  background: linear-gradient(#ffc894, #ffb26a 42%, #ffa53a 43%, #ffdf86);
  border: 1px solid #54729c;
  box-shadow: inset 0 0 0 1px #e9d0b8;
  padding-left: 4px;
}
.modes-foot {
  flex: 1;
  display: flex;
  align-items: center;
  justify-content: flex-end;
  padding: 0 8px 4px;
}
.main {
  flex: 1;
  min-width: 0;
  display: flex;
  flex-direction: column;
  background: #cfdcee;
}

/* dashboard strip */
.dash {
  height: 43px;
  flex: none;
  display: flex;
  gap: 2px;
  background: linear-gradient(#e8e8e8, #d2d2d2 15%, #d2d2d2 88%, #999);
}
.dash-box {
  display: flex;
  align-items: center;
  gap: 5px;
  padding: 0 10px 0 11px;
  white-space: nowrap;
  border: 3px solid;
}
.dash-box .value {
  margin-right: 8px;
}
.capital {
  width: 388px;
  background: linear-gradient(#d2f0d0, #b8deb7 30%, #c2e8c0);
  border-color: #48a830;
}
.energy {
  width: 355px;
  background: #bce0ff;
  border-color: #4880fa;
}
.exchanger {
  width: 345px;
  gap: 8px;
  padding: 0 10px;
  background: linear-gradient(#ecd4b4, #e2c6a2);
  border-color: #9c8460;
}
.exchanger b {
  margin-right: 9px;
}
.exchanger b:last-of-type {
  margin-right: 0;
}
.toggle {
  appearance: none;
  width: 38px;
  height: 20px;
  margin-left: auto;
  border-radius: 10px;
  background: radial-gradient(circle at 10px 10px, #b9b5b5 7px, transparent 8px), linear-gradient(#5c5556, #150a0c);
}
.status {
  margin-left: auto;
  margin-right: -3px;
  border: 1px solid #b69a74;
  border-radius: 2px;
}
.status svg {
  width: 32px;
  height: 24px;
}
.dash-tools {
  margin-left: auto;
  display: flex;
  align-items: center;
  gap: 18px;
  padding: 0 13px 15px 0;
}

/* document tabs */
.doc-tabs {
  height: 24px;
  flex: none;
  display: flex;
  align-items: flex-end;
  padding-left: 19px;
  position: relative;
  z-index: 0;
}
.doc {
  height: 20px;
  display: flex;
  align-items: center;
  gap: 7px;
  padding: 0 9px 0 8px;
  background: #dde8f6;
  border: 1px solid #95a6bc;
  border-width: 1px 1px 0 0;
  border-radius: 5px 5px 0 0;
  position: relative;
}
.doc i {
  font-size: 18px;
  font-style: normal;
  color: #98a3b0;
}
.doc.slant {
  border-radius: 0 5px 0 0;
  padding-left: 9px;
}
.doc.slant::before {
  content: "";
  position: absolute;
  left: -9px;
  top: -1px;
  bottom: 0;
  width: 18px;
  background: inherit;
  border: 1px solid #95a6bc;
  border-width: 1px 0 0 1px;
  border-radius: 5px 0 0 0;
  transform: skewX(-38deg);
  z-index: -1;
}
.doc.active {
  height: 21px;
  gap: 5px;
  padding: 0 8px 0 5px;
  font-weight: 700;
  background: #b9cae4;
}
.doc.active i {
  font-weight: 400;
}
.plus {
  margin: 0 0 2px 6px;
  background: #f0f6fd;
  border: 1px solid #cdcfd2;
  border-radius: 3px;
}
.plus svg {
  width: 15px;
  height: 15px;
}
.doc-tabs > .arrow {
  margin: 0 2px 8px auto;
  border-top-color: #1e3f74;
}

/* results sheet */
.sheet {
  flex: 1;
  min-height: 0;
  display: flex;
  margin: 0 0 5px;
  padding: 3px;
  background: #c5dcf3;
  border: 1px solid #8b9cb4;
  border-radius: 4px;
}
.sheet-inner {
  flex: 1;
  display: flex;
  flex-direction: column;
  border: 1px solid #8b9cb4;
  outline: 3px solid #fff;
  outline-offset: -4px;
  padding: 4px 5px 4px 4px;
  background: #bbcde5;
}
.page-tabs {
  height: 31px;
  flex: none;
  display: flex;
  align-items: flex-end;
  padding: 0 14px 1px;
}
.page {
  height: 26px;
  display: flex;
  align-items: center;
  gap: 4px;
  padding: 0 10px 0 9px;
  background: linear-gradient(#f6f6f6, #e4e4e4 50%, #cfcfcf);
  border: 1px solid #8b8b90;
  border-width: 1px 1px 0;
  border-radius: 3px 3px 0 0;
}
.page + .page {
  margin-left: 1px;
}
.page.active {
  height: 30px;
  padding: 0 10px;
  margin-right: -2px;
  background: #fff;
  border-color: #10108c;
  position: relative;
}
.page:disabled {
  color: #8b8b8b;
  background: #f3f3f3;
  border-color: #cbc6bd;
}
.page svg {
  width: 16px;
  height: 16px;
}
.panel {
  flex: 1;
  min-height: 0;
  padding: 6px;
  position: relative;
  background: linear-gradient(#eef5fd, #e6effa 30%, #dbe8f4 60%, #d7e3f1);
  display: flex;
}
.form {
  flex: 1;
  display: grid;
  grid-template-columns: 221px 107px 149px 1fr;
  grid-auto-rows: 26px;
  align-content: start;
  align-items: center;
  gap: 4px 6px;
  padding: 10px 9px;
  border: 1px dotted #000;
}
.form label {
  grid-column: 1;
}
.form input, .form select {
  width: 100%;
  height: 26px;
  padding: 0 2px;
  font-size: 14px;
  background-color: #fff;
  border: 1px solid #d8dfe8;
  border-top-color: #b4bcc8;
  border-radius: 2px;
}
.form input {
  text-align: right;
}
.form select {
  padding: 0 4px;
}
.highlight {
  position: absolute;
  left: -14px;
  top: 103px;
  width: 586px;
  height: 72px;
  border: 7px solid #fb3838;
}
.note {
  position: absolute;
  left: 686px;
  top: 131px;
  font-size: 20px;
  line-height: 26px;
  color: #fb3838;
}

/* model palette */
.palette {
  height: 168px;
  flex: none;
  display: flex;
  flex-direction: column;
  margin-right: 1px;
  background: #c8daee;
  border: 1px solid #8b9cb4;
}
.palette-head {
  height: 28px;
  flex: none;
  display: flex;
  align-items: center;
  justify-content: space-between;
  padding: 0 7px 0 4px;
  background: #deeaf6;
}
.palette-head h2 {
  color: #7387c6;
}
.palette-head svg {
  width: 52px;
  height: 14px;
  margin-bottom: 8px;
}
.palette-body {
  flex: 1;
  display: flex;
  gap: 7px;
  padding: 3px 2px 3px 4px;
}
.palette-left {
  width: 105px;
  padding-top: 7px;
}
.pointer {
  display: block;
  margin-bottom: 5px;
  background: #fff;
  border: 1px solid #0b8a0b;
}
.pointer svg {
  width: 23px;
  height: 23px;
}
.palette-right {
  flex: 1;
  display: flex;
  flex-direction: column;
  background: #bbcde5;
}
.palette-right .tabs {
  height: 32px;
  padding-left: 18px;
}
.models {
  flex: 1;
  display: flex;
  align-items: center;
  gap: 5px;
  padding: 0 5px 1px;
  background: linear-gradient(#f0f6fe, #e4edf8 30%, #d9e6f3 60%, #d7e3f1);
  border: 1px solid #b4c8e0;
}
.item {
  display: flex;
  align-items: center;
  gap: 5px;
  padding-right: 4px;
}
.model {
  width: 88px;
  height: 88px;
  flex: none;
  display: flex;
  flex-direction: column;
  align-items: center;
  justify-content: space-between;
  padding: 3px 6px 1px 0;
  background: #dfe7f8;
  border: 1px solid #777;
  box-shadow: inset 0 0 0 1px #d4d4d8;
}
.model svg {
  width: 60px;
  height: 60px;
}
.pager {
  width: 20px;
  height: 88px;
  display: grid;
  place-items: center;
  background: #f2f2f2;
  border: 1px solid #ababab;
  border-radius: 3px;
}
.pager svg {
  width: 12px;
  height: 62px;
  fill: #a8a8a8;
}
.pager.last {
  margin-left: auto;
}

/* status bar */
.statusbar {
  height: 36px;
  flex: none;
  display: flex;
  align-items: center;
  gap: 7px;
  padding: 0 5px 2px 4px;
  background: linear-gradient(#dde8f6, #b9c9de 70%, #afbfd6);
  border-top: 1px solid #7f9cc0;
}
.check {
  width: 94px;
  height: 28px;
  background: linear-gradient(#f6f6f6, #e8e8e8 50%, #d2d2d2);
  border: 1px solid #777;
  border-radius: 3px;
}
.zoom {
  margin-left: auto;
  display: flex;
  align-items: center;
  gap: 6px;
  color: #4a4f57;
}
.zoom > span {
  margin-right: 14px;
}
.zoom svg {
  width: 18px;
  height: 18px;
  fill: none;
  stroke: #4a4f57;
  stroke-width: 2;
}
.zoom circle {
  stroke-width: 1;
}
.zoom input {
  appearance: none;
  width: 150px;
  height: 22px;
  margin: 0 1px 6px;
}
.zoom input::-webkit-slider-runnable-track {
  height: 4px;
  background: #eef1f5;
  border-top: 1px solid #a9b1bc;
  border-radius: 2px;
}
.zoom input::-webkit-slider-thumb {
  appearance: none;
  width: 12px;
  height: 22px;
  margin-top: -9px;
  background: linear-gradient(90deg, #fff, #ddd);
  border: 1px solid #666;
  border-radius: 2px 2px 6px 6px;
}

/* input method bar */
.ime {
  position: absolute;
  right: 0;
  bottom: 128px;
  height: 32px;
  display: flex;
  align-items: center;
  gap: 10px;
  padding-right: 5px;
  background: #fff;
  border-bottom: 1px solid #b4cbe4;
}
.ime svg {
  width: 20px;
  height: 20px;
}
.ime .ime-logo {
  width: 40px;
  height: 38px;
  margin: -5px -4px 0 -1px;
}
```
